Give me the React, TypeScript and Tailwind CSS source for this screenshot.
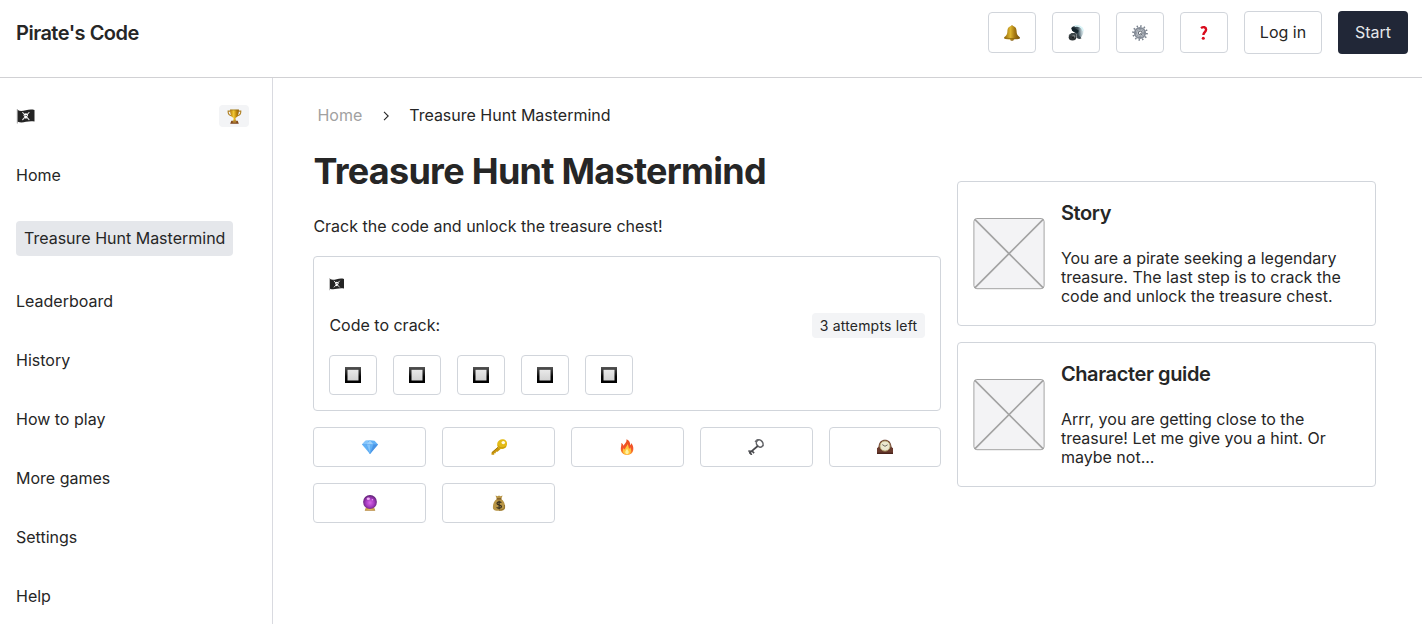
import React from "react";

type IconProps = { className?: string };

function Bell() {
  return (
    <svg className="h-4 w-4" viewBox="0 0 16 16">
      <defs>
        <linearGradient id="bell" x1="0" x2="1">
          <stop offset="0" stopColor="#94690c" />
          <stop offset=".4" stopColor="#dcb52f" />
          <stop offset=".65" stopColor="#a97c14" />
          <stop offset="1" stopColor="#6f4c06" />
        </linearGradient>
      </defs>
      <circle cx="8" cy="1.5" r="1.2" fill="#b58c2a" />
      <ellipse cx="8" cy="14.4" rx="1.8" ry="1.3" fill="#87600f" />
      <path d="M8 1C4.700 1 3.500 3.500 3.400 6.200 3.300 9 2.500 10.500.2 12.200v1.300c2.500 1.300 13.100 1.300 15.600 0v-1.300C13.500 10.500 12.700 9 12.600 6.200 12.500 3.500 11.300 1 8 1Z" fill="url(#bell)" />
      <path d="M.6 12.800c3 1 11.800 1 14.800 0" fill="none" stroke="#8a6410" strokeWidth=".8" />
    </svg>
  );
}

function Speaker() {
  return (
    <svg className="h-4 w-4" viewBox="0 0 16 16">
      <defs>
        <linearGradient id="cone" x1="0" x2="1" y1=".5" y2=".4">
          <stop offset="0" stopColor="#101c22" />
          <stop offset=".55" stopColor="#43545d" />
          <stop offset=".8" stopColor="#aebfc6" />
          <stop offset="1" stopColor="#e9f5f7" />
        </linearGradient>
      </defs>
      <path d="M3.500 2.800C6 .2 11 .2 13.500 2.300c2.300 2 2.700 4.200 1.500 6.700l-2.500 4.500L8.500 9 4 5.500Z" fill="url(#cone)" />
      <path d="M6.500 1.300c3.500-1.200 7.800.3 8.700 4.400" fill="none" stroke="#d9f4f7" strokeWidth="1.700" />
      <path d="M3.300 3.300c1.500-1.500 4-.3 7.500 2.500L9.500 8.300 4.500 6Z" fill="#14242b" />
      <path d="m8.500 8.300 5 5c-1.800 1.200-4 .9-5-1Z" fill="#39444b" />
      <ellipse cx="4.500" cy="12.200" rx="3.800" ry="3.200" fill="#303537" />
      <path d="M.5 10.200 3.500 8h4l1.200 2.500-3.500 1Z" fill="#3e474a" />
      <circle cx="5.700" cy="11.300" r="1.500" fill="#767d7f" />
      <circle cx="5" cy="12.300" r="1" fill="#151719" />
    </svg>
  );
}

function Gear() {
  return (
    <svg className="h-4 w-4" viewBox="0 0 16 16">
      <circle cx="8" cy="8" r="6.900" fill="none" stroke="#78818d" strokeWidth="1.900" strokeDasharray="1.400 2.213" />
      <circle cx="8" cy="8" r="5.100" fill="none" stroke="#858c97" strokeWidth="2" />
      <circle cx="8" cy="8" r="3.700" fill="#c0c5cc" stroke="#777f8b" strokeWidth=".7" />
      <circle cx="8.200" cy="8" r="1.900" fill="#f3f4f6" stroke="#565d67" strokeWidth=".9" />
      <path d="M8.200 8 9.600 9.500" stroke="#555c66" strokeWidth=".8" />
    </svg>
  );
}

function Question() {
  return (
    <svg className="h-4 w-4" viewBox="0 0 16 16">
      <path d="M5 3.100C7.300 1.400 10.100 2 10.100 4.600c0 2.500-2.700 2.700-2.700 5.500" fill="none" stroke="#d90b1c" strokeWidth="2.400" />
      <circle cx="7.300" cy="13.300" r="1.550" fill="#d90b1c" />
    </svg>
  );
}

function PirateFlag({ className }: IconProps) {
  return (
    <svg className={className} viewBox="0 0 18 16">
      <path d="M.8 1v14.500" stroke="#9a9a9a" strokeWidth=".9" />
      <path d="M1.200 2.100c3 1.500 5 .7 8 .1 3-.7 5.800-.9 8.800-.3v11.600c-3-.6-5.700-.3-8.500.3-3 .7-5.600.9-8.300 0Z" fill="#242424" />
      <path d="m6.200 4.500 6.300 7.200m0-7.200-6.300 7.200" stroke="#e9e9e9" strokeWidth="1.100" strokeLinecap="round" />
      <ellipse cx="9.300" cy="7.200" rx="2.100" ry="2" fill="#fff" />
      <path d="M8.300 8.500h2v2h-2Z" fill="#fff" />
      <circle cx="8.500" cy="7.400" r=".5" fill="#222" />
      <circle cx="10.100" cy="7.400" r=".5" fill="#222" />
    </svg>
  );
}

function Trophy() {
  return (
    <svg className="h-[15px] w-[15px]" viewBox="0 0 16 16">
      <defs>
        <linearGradient id="cup" x1="0" x2="1">
          <stop offset="0" stopColor="#b67c08" />
          <stop offset=".4" stopColor="#f2c934" />
          <stop offset=".7" stopColor="#c08a0c" />
          <stop offset="1" stopColor="#935f04" />
        </linearGradient>
      </defs>
      <path d="M3.800 2.300H1.200c-.2 2.800 1.700 4.700 4 5m6.900-5h2.600c.2 2.800-1.700 4.700-4 5" fill="none" stroke="#b08022" strokeWidth="1.200" />
      <path d="M3.300.7h9.400c0 4.500-1.200 7.900-3.700 9l.5 3.500h-3L7 9.700C4.500 8.600 3.300 5.200 3.300.7Z" fill="url(#cup)" />
      <path d="M3.300 1h9.400" stroke="#8f6a12" strokeWidth=".7" />
      <path d="M4.600 12.600h6.800l1.200 3H3.400Z" fill="#7c4319" />
      <path d="M6 13.300h4v1H6Z" fill="#e1b746" />
    </svg>
  );
}

function SquareButtonIcon() {
  return (
    <svg className="h-4 w-4" viewBox="0 0 16 16">
      <defs>
        <linearGradient id="sqo" x2="0" y2="1">
          <stop offset="0" stopColor="#555" />
          <stop offset=".6" stopColor="#050505" />
          <stop offset="1" stopColor="#000" />
        </linearGradient>
        <linearGradient id="sqi" x2="0" y2="1">
          <stop offset="0" stopColor="#e9e9e9" />
          <stop offset="1" stopColor="#d2d2d2" />
        </linearGradient>
      </defs>
      <path d="M0 0h16v16H0Z" fill="url(#sqo)" />
      <path d="M2.500 2.800h11v10.700h-11Z" fill="url(#sqi)" />
    </svg>
  );
}

function Gem() {
  return (
    <svg className="h-4 w-4" viewBox="0 0 16 16">
      <path d="M3.500 1.800C6 1 10 1 12.500 1.800L16 5.500 8 15 0 5.500Z" fill="#62b2f7" />
      <path d="M3.500 1.800 0 5.500h4.500L8 15V5.500L5.500 1.500Z" fill="#85c5fb" />
      <path d="m4.500 5.500 3.500-4 3.500 4Z" fill="#a0d2fb" />
      <path d="M11.500 5.500H16L8 15Z" fill="#4b93e3" />
      <path d="M0 5.500h16M4.500 5.500 8 15l3.500-9.500" fill="none" stroke="#4b9be8" strokeWidth=".4" />
    </svg>
  );
}

function Key() {
  return (
    <svg className="h-4 w-4" viewBox="0 0 16 16">
      <path d="M8 7 .5 13.500v2.200h2.700v-1.500h1.600v-1.500h1.700L10.500 9.200Z" fill="#c9960c" />
      <path d="M8 7.300 1 13.600" stroke="#9a7105" strokeWidth=".8" />
      <path d="M6.500 3.500C7.500.8 10.500-.5 13.300.5c2.900 1.300 3.600 4.800 1.800 7.400-1.900 2.200-4.900 2.600-7.200 1.300C6.300 8 5.800 5.700 6.500 3.500Z" fill="#e3bb16" />
      <path d="M7 6.500c1.500 3 5.200 3 7.800 1.100" fill="none" stroke="#bb8b08" strokeWidth=".9" />
      <ellipse cx="12.300" cy="3.600" rx="1.800" ry="1.600" fill="#fffbe5" />
    </svg>
  );
}

function Fire() {
  return (
    <svg className="h-4 w-4" viewBox="0 0 16 16">
      <defs>
        <linearGradient id="fire" x2="0" y2="1">
          <stop offset="0" stopColor="#e8501d" />
          <stop offset=".6" stopColor="#f4552b" />
          <stop offset="1" stopColor="#fb9a2c" />
        </linearGradient>
      </defs>
      <path d="M7.500.2c2.800 1 4 3.500 3.700 6 .8-.5 1-1.300 1-2.200 1.600 1.800 2.400 4.200 2.100 6.500-.3 3.400-2.700 5.300-6.200 5.300-3.700 0-6.200-2.200-6.300-5.600C1.700 8 2.700 6.700 2.300 4c1.200.6 1.900 1.500 2 2.700C5.800 4.800 8 3 7.500.2Z" fill="url(#fire)" />
      <path d="M8.400 5c1.500 2 1 3.500 1.800 4.700.6-.3.900-.8 1-1.500 1.800 3.500.7 7.300-3.100 7.300s-5.200-3.200-3.600-6.600c.3.900.7 1.300 1.400 1.500C6.100 8 8.500 7.500 8.400 5Z" fill="#ffc63b" />
      <path d="M8.100 9.500c.2 1.500 1.900 2.400 1.600 4.200-.5 1.700-2.900 1.700-3.400 0-.3-1.500 1.300-2.700 1.800-4.200Z" fill="#fff2a0" />
    </svg>
  );
}

function OldKey() {
  return (
    <svg className="h-4 w-4" viewBox="0 0 16 16">
      <ellipse cx="11.700" cy="4.500" rx="3.100" ry="3.900" transform="rotate(-35 11.700 4.500)" fill="none" stroke="#626367" strokeWidth="1.500" />
      <path d="M9.400 2.600 7.500 2.300c.8-1.300 2-2 3.500-1.500M14 6.200l1.600.7" fill="none" stroke="#66676b" strokeWidth="1.200" />
      <path d="M9.800 7 1.300 14.200" stroke="#47484c" strokeWidth="1.700" />
      <path d="m3.800 11.700 2.300 2.400m-4.500-.6 2.200 2.400M.3 12l2.600.2" stroke="#47484c" strokeWidth="1.600" />
    </svg>
  );
}

function Clock() {
  return (
    <svg className="h-4 w-4" viewBox="0 0 16 16">
      <path d="M0 15v-6c1-.2 1.500-1 1.600-2C2.200 3 4.500.8 8 .8S13.800 3 14.400 7c.1 1 .6 1.800 1.600 2v6Z" fill="#693a2d" />
      <path d="M0 13.600h16V15H0Z" fill="#4a241c" />
      <circle cx="8" cy="7" r="5.100" fill="#eeead1" stroke="#ad9c66" strokeWidth=".9" />
      <circle cx="8" cy="7" r="3.600" fill="none" stroke="#d5d0b8" strokeWidth=".5" strokeDasharray=".6 1.200" />
      <path d="m5.300 5.600 2.700 1.700 2.600-1.500" fill="none" stroke="#4b4940" strokeWidth=".8" />
    </svg>
  );
}

function CrystalBall() {
  return (
    <svg className="h-4 w-4" viewBox="0 0 16 16">
      <defs>
        <radialGradient id="ball" cx=".5" cy=".55" r=".55">
          <stop offset="0" stopColor="#d86ae8" />
          <stop offset=".55" stopColor="#a63ac0" />
          <stop offset="1" stopColor="#5d2072" />
        </radialGradient>
      </defs>
      <path d="M4 12.300h8l1.300 3.500H2.700Z" fill="#b98a3c" />
      <circle cx="8" cy="7" r="6.900" fill="url(#ball)" />
      <path d="M4 13.900c2.500.8 5.500.8 8 0" fill="none" stroke="#e1bd65" strokeWidth=".9" />
      <ellipse cx="6.300" cy="3.800" rx="1.600" ry="1.200" fill="#efb7f3" />
      <circle cx="10.400" cy="4.700" r=".7" fill="#e7a0ee" />
    </svg>
  );
}

function MoneyBag() {
  return (
    <svg className="h-4 w-4" viewBox="0 0 16 16">
      <path d="m4.500.5 2.200.7L8 .5l1.500.7 2.100-.6L10.200 4c2.700 1.800 3.900 4.700 3.900 8.200 0 2.600-1.500 3.600-6.100 3.600s-6.100-1-6.100-3.600C1.900 8.700 3.100 5.800 5.800 4Z" fill="#b89545" />
      <path d="M5.700 3.900h4.700" stroke="#6f4c1c" strokeWidth="1.100" />
      <path d="M13.500 10c.4 3.500-.5 5-5.500 5.200" fill="none" stroke="#8a6a2b" strokeWidth=".9" />
      <path d="M10.400 7.600C9.200 6.500 6 6.500 6 8.500c0 2.100 4.500 1 4.500 3.100 0 2-3.500 2-4.900.8M8.100 5.700v8.500" fill="none" stroke="#37301f" strokeWidth="1.200" />
    </svg>
  );
}

function Placeholder() {
  return (
    <svg className="h-[72px] w-[72px] shrink-0" viewBox="0 0 72 72">
      <rect x=".9" y=".5" width="70.200" height="70.200" rx="3" fill="#f3f3f5" stroke="#a3a3a3" />
      <path d="m1.800 1.400 68.400 68.400M70.200 1.400 1.800 69.800" stroke="#a3a3a3" strokeWidth="1.700" />
    </svg>
  );
}

function InfoCard({ title, lines }: { title: string; lines: string[] }) {
  return (
    <section className="flex h-[145px] items-center gap-4 rounded border border-[#d1d5db] pl-[14.5px]">
      <Placeholder />
      <div className="self-start pt-[19px]">
        <h2 className="text-[20px] leading-6 font-semibold tracking-[-0.38px]">{title}</h2>
        <p className="mt-[24px] leading-[19px]">
          {lines.map((l) => (
            <span key={l} className="block whitespace-nowrap">{l}</span>
          ))}
        </p>
      </div>
    </section>
  );
}

const toolbar = [Bell, Speaker, Gear, Question];
const pieces = [Gem, Key, Fire, OldKey, Clock, CrystalBall, MoneyBag];
const nav = ["Home", "Treasure Hunt Mastermind", "Leaderboard", "History", "How to play", "More games", "Settings", "Help"];

export default function App() {
  return (
    <div className="flex h-[624px] w-[1422px] flex-col overflow-hidden bg-white font-['Inter',sans-serif] text-[16px] leading-[19px] text-[#262626]">
      <header className="flex h-[78px] shrink-0 items-start justify-between border-b border-[#d1d1d4] pt-[11px] pr-[14px] pl-4">
        <h1 className="mt-[10px] text-[20px] leading-6 font-semibold tracking-[-0.5px]">Pirate's Code</h1>
        <div className="flex items-center gap-4">
          {toolbar.map((Icon, i) => (
            <button key={i} className="flex h-[41px] w-12 items-center justify-center rounded border border-[#d1d5db]">
              <Icon />
            </button>
          ))}
          <button className="h-[43px] w-[78px] rounded border border-[#d1d5db]">Log in</button>
          <button className="h-[43px] w-[70px] rounded bg-[#212737] text-gray-200">Start</button>
        </div>
      </header>
      <div className="flex min-h-0 flex-1">
        <aside className="w-[273.4px] shrink-0 border-r border-[#d9dae0] pt-[27px] pl-4">
          <div className="flex h-[22px] items-center justify-between pr-[23px]">
            <PirateFlag className="h-4 w-[19px]" />
            <div className="flex h-[22px] w-[30px] items-center justify-center rounded bg-[#f3f4f6]">
              <Trophy />
            </div>
          </div>
          <nav className="mt-[35px] flex flex-col items-start gap-8">
            {nav.map((n, i) => (
              <a key={n} className={i === 1 ? "rounded bg-[#e5e7eb] px-2 py-2 whitespace-nowrap" : "py-1"}>{n}</a>
            ))}
          </nav>
        </aside>
        <main className="flex flex-1 gap-4 pl-10">
          <div className="w-[628px] shrink-0 pt-7">
            <div className="flex items-center pl-1">
              <span className="text-neutral-400">Home</span>
              <svg className="mr-[17px] ml-[18px] h-3 w-3" viewBox="0 0 12 12" fill="none" stroke="#262626" strokeWidth="1.100">
                <path d="m4 1.800 4.200 4.200L4 10.200" />
              </svg>
              <span>Treasure Hunt Mastermind</span>
            </div>
            <h2 className="mt-[23px] text-[36px] leading-[46px] font-bold tracking-[-0.72px] whitespace-nowrap">Treasure Hunt Mastermind</h2>
            <p className="mt-[23px]">Crack the code and unlock the treasure chest!</p>
            <section className="mt-5 h-[155px] rounded border border-[#d1d5db] px-[15px] pt-5">
              <PirateFlag className="h-[14px] w-[15px]" />
              <div className="mt-[22px] flex h-[25px] items-center justify-between">
                <span>Code to crack:</span>
                <span className="flex h-[25px] items-center rounded bg-[#f3f4f6] px-2 text-[14px] tracking-[0.2px]">3 attempts left</span>
              </div>
              <div className="mt-[17px] flex gap-4">
                {[0, 1, 2, 3, 4].map((i) => (
                  <button key={i} className="flex h-10 w-12 items-center justify-center rounded border border-[#d1d5db]">
                    <SquareButtonIcon />
                  </button>
                ))}
              </div>
            </section>
            <div className="mt-4 grid grid-cols-5 gap-4">
              {pieces.map((Icon, i) => (
                <button key={i} className="flex h-10 items-center justify-center rounded border border-[#d1d5db]">
                  <Icon />
                </button>
              ))}
            </div>
          </div>
          <div className="flex w-[418.600px] flex-col gap-4 pt-[103px]">
            <InfoCard
              title="Story"
              lines={["You are a pirate seeking a legendary", "treasure. The last step is to crack the", "code and unlock the treasure chest."]}
            />
            <InfoCard
              title="Character guide"
              lines={["Arrr, you are getting close to the", "treasure! Let me give you a hint. Or", "maybe not..."]}
            />
          </div>
        </main>
      </div>
    </div>
  );
}
